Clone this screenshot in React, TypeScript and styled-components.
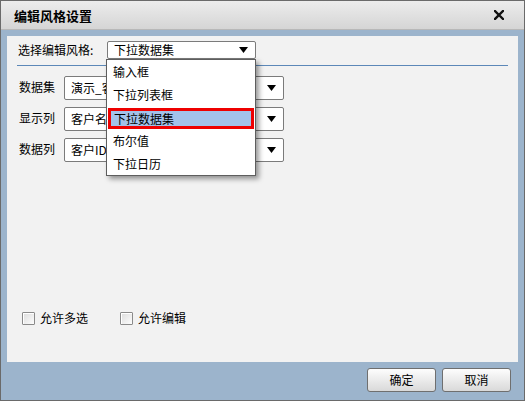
import React from "react";
import styled, { createGlobalStyle } from "styled-components";

const Global = createGlobalStyle`
  html, body { margin: 0; padding: 0; background: #ffffff; }
  body { font-family: "Noto Sans CJK SC", "Liberation Sans", sans-serif; font-size: 12px; color: #000; }
  * { box-sizing: border-box; }
`;

const Window = styled.div`
  width: 525px;
  height: 401px;
  border: 1px solid #6a6a6a;
  background: #9cb4cc;
  display: flex;
  flex-direction: column;
`;

const TitleBar = styled.div`
  height: 29px;
  flex: none;
  display: flex;
  align-items: center;
  justify-content: space-between;
  padding: 0 20px 0 13px;
  background: linear-gradient(#ececec, #d5d5d5);
  border-bottom: 1px solid #b8b8b8;
`;

const Title = styled.div`
  font-size: 13px;
  font-weight: bold;
  letter-spacing: 0px;
`;

const Body = styled.div`
  flex: 1;
  display: flex;
  flex-direction: column;
  padding: 6px 6px 0 6px;
`;

const Panel = styled.div`
  height: 326px;
  background: #f2f2f2;
  display: flex;
  flex-direction: column;
  padding: 5px 10px 37px 10px;
`;

const TopRow = styled.div`
  display: flex;
  align-items: center;
  height: 18px;
`;

const TopLabel = styled.div`
  width: 90px;
  padding-left: 1px;
  line-height: 18px;
`;

const ComboWrap = styled.div`
  position: relative;
`;

const Combo = styled.div<{ $w: number; $h: number }>`
  width: ${(p) => p.$w}px;
  height: ${(p) => p.$h}px;
  background: #fff;
  border: 1px solid #7b7b7b;
  border-radius: 2px;
  display: flex;
  align-items: center;
  justify-content: space-between;
  padding: 0 7px 0 6px;
  white-space: nowrap;
  overflow: hidden;
`;

const ComboText = styled.span`
  line-height: 16px;
`;

const Separator = styled.div`
  height: 1px;
  background: #5c88b8;
  margin-top: 6px;
`;

const Fields = styled.div`
  display: flex;
  flex-direction: column;
  gap: 7px;
  margin-top: 10px;
`;

const FieldRow = styled.div`
  display: flex;
  align-items: center;
  padding-left: 2px;
`;

const FieldLabel = styled.div`
  width: 45px;
  line-height: 16px;
  padding-bottom: 3px;
`;

const Dropdown = styled.div`
  position: absolute;
  top: 18px;
  left: -1px;
  width: 150px;
  height: 117px;
  background: #fff;
  border: 1px solid #5e5e5e;
  box-shadow: 3px 3px 5px rgba(0, 0, 0, 0.4);
  z-index: 10;
  display: flex;
  flex-direction: column;
`;

const Item = styled.div<{ $active?: boolean }>`
  height: ${(p) => (p.$active ? 21 : 23)}px;
  margin: ${(p) => (p.$active ? "2px 1px 0 1px" : "0")};
  padding-left: ${(p) => (p.$active ? 3 : 6)}px;
  display: flex;
  align-items: center;
  font-size: 12px;
  background: ${(p) => (p.$active ? "#a3c2ea" : "transparent")};
  border: ${(p) => (p.$active ? "3px solid #ee0000" : "none")};
`;

const Checks = styled.div`
  margin-top: auto;
  display: flex;
  align-items: center;
  padding-left: 5px;
  gap: 0;
`;

const CheckLabel = styled.label`
  display: flex;
  align-items: center;
  gap: 5px;
  width: 98px;
  line-height: 14px;
`;

const Box = styled.span`
  width: 13px;
  height: 13px;
  border: 1px solid #8a8a8a;
  border-radius: 1px;
  background: linear-gradient(135deg, #dcdcdc, #fdfdfd);
  box-shadow: inset 1px 1px 0 #fff;
`;

const Footer = styled.div`
  flex: 1;
  display: flex;
  justify-content: flex-end;
  align-items: flex-start;
  gap: 6px;
  padding: 6px 7px 0 0;
`;

const Button = styled.button`
  width: 69px;
  height: 24px;
  border: 1px solid #6f6f6f;
  border-radius: 3px;
  background: linear-gradient(#fdfdfd, #d9d9d9);
  font-family: "Noto Sans CJK SC", "Liberation Sans", sans-serif;
  font-size: 12px;
  color: #000;
  padding: 0;
  line-height: 20px;
`;

const Arrow = () => (
  <svg width="9" height="6" viewBox="0 0 9 6">
    <polygon points="0,0 9,0 4.5,6" fill="#000" />
  </svg>
);

const CloseIcon = () => (
  <svg width="10" height="10" viewBox="0 0 10 10">
    <path d="M1 1 L9 9 M9 1 L1 9" stroke="#111" strokeWidth="2.4" strokeLinecap="square" />
  </svg>
);

const items = ["输入框", "下拉列表框", "下拉数据集", "布尔值", "下拉日历"];

export default function App() {
  return (
    <>
      <Global />
      <Window>
        <TitleBar>
          <Title>编辑风格设置</Title>
          <CloseIcon />
        </TitleBar>
        <Body>
          <Panel>
            <TopRow>
              <TopLabel>选择编辑风格:</TopLabel>
              <ComboWrap>
                <Combo $w={149} $h={18}>
                  <ComboText>下拉数据集</ComboText>
                  <Arrow />
                </Combo>
                <Dropdown>
                  {items.map((t) => (
                    <Item key={t} $active={t === "下拉数据集"}>
                      {t}
                    </Item>
                  ))}
                </Dropdown>
              </ComboWrap>
            </TopRow>
            <Separator />
            <Fields>
              <FieldRow>
                <FieldLabel>数据集</FieldLabel>
                <Combo $w={220} $h={24}>
                  <ComboText>演示_客户信息</ComboText>
                  <Arrow />
                </Combo>
              </FieldRow>
              <FieldRow>
                <FieldLabel>显示列</FieldLabel>
                <Combo $w={220} $h={24}>
                  <ComboText>客户名称</ComboText>
                  <Arrow />
                </Combo>
              </FieldRow>
              <FieldRow>
                <FieldLabel>数据列</FieldLabel>
                <Combo $w={220} $h={24}>
                  <ComboText>客户ID</ComboText>
                  <Arrow />
                </Combo>
              </FieldRow>
            </Fields>
            <Checks>
              <CheckLabel>
                <Box />
                允许多选
              </CheckLabel>
              <CheckLabel>
                <Box />
                允许编辑
              </CheckLabel>
            </Checks>
          </Panel>
          <Footer>
            <Button>确定</Button>
            <Button>取消</Button>
          </Footer>
        </Body>
      </Window>
    </>
  );
}
